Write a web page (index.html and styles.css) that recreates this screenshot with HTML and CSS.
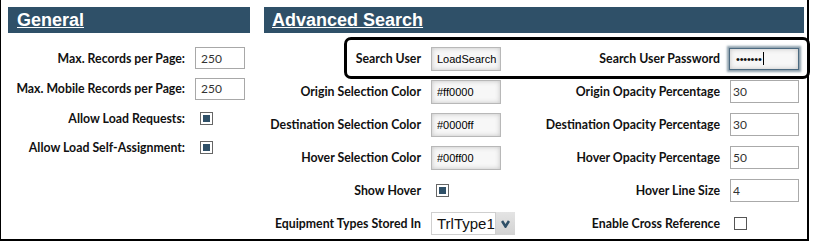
FILE: index.html
```html
<!DOCTYPE html>
<html>
<head>
<meta charset="utf-8">
<link rel="stylesheet" href="styles.css">
</head>
<body>
<div class="frame">
  <section class="panel general">
    <h2 class="hd">General</h2>
    <div class="form-left">
      <label class="lbl">Max. Records per Page:</label>
      <input class="inp" type="text" value="250">
      <label class="lbl">Max. Mobile Records per Page:</label>
      <input class="inp" type="text" value="250">
      <label class="lbl">Allow Load Requests:</label>
      <span class="cb checked"><span></span></span>
      <label class="lbl">Allow Load Self-Assignment:</label>
      <span class="cb checked"><span></span></span>
    </div>
  </section>
  <section class="panel adv">
    <h2 class="hd">Advanced Search</h2>
    <div class="form-right">
      <label class="lbl">Search User</label>
      <input class="cinp" type="text" value="LoadSearch">
      <label class="lbl">Search User Password</label>
      <div class="pw"><span class="dots">&#8226;&#8226;&#8226;&#8226;&#8226;&#8226;&#8226;</span><span class="caret"></span></div>

      <label class="lbl">Origin Selection Color</label>
      <input class="cinp" type="text" value="#ff0000">
      <label class="lbl">Origin Opacity Percentage</label>
      <input class="ninp" type="text" value="30">

      <label class="lbl">Destination Selection Color</label>
      <input class="cinp" type="text" value="#0000ff">
      <label class="lbl">Destination Opacity Percentage</label>
      <input class="ninp" type="text" value="30">

      <label class="lbl">Hover Selection Color</label>
      <input class="cinp" type="text" value="#00ff00">
      <label class="lbl">Hover Opacity Percentage</label>
      <input class="ninp" type="text" value="50">

      <label class="lbl">Show Hover</label>
      <span class="cb checked"><span></span></span>
      <label class="lbl">Hover Line Size</label>
      <input class="ninp" type="text" value="4">

      <label class="lbl">Equipment Types Stored In</label>
      <div class="sel">
        <span class="sel-text">TrlType1</span>
        <span class="sel-btn"><svg width="9" height="8" viewBox="0 0 9 8"><polyline points="1,1 4.5,6.5 8,1" fill="none" stroke="#2f5068" stroke-width="2.6"/></svg></span>
      </div>
      <label class="lbl">Enable Cross Reference</label>
      <span class="cb"></span>
    </div>
  </section>
  <div class="highlight"></div>
</div>
</body>
</html>
```
FILE: styles.css
```css
* { box-sizing: border-box; }
body { margin: 0; background: #fff; font-family: Lato, "Liberation Sans", sans-serif; }

.frame {
  position: relative;
  width: 809px;
  height: 241px;
  border-left: 1px solid #000;
  border-right: 2px solid #000;
  border-bottom: 2px solid #000;
  padding: 7px 3px 0 7px;
  display: flex;
  gap: 14px;
}
.general { width: 242px; }
.adv { width: 540px; }

.hd {
  margin: 0;
  height: 26px;
  background: #2f5068;
  color: #fff;
  font: bold 18px/27px "Liberation Sans", Arial, sans-serif;
  text-decoration: underline;
  text-underline-offset: 1px;
  padding-left: 9px;
}
.adv .hd { padding-left: 8px; }

.form-left {
  display: grid;
  grid-template-columns: 177px 55px;
  grid-template-rows: 30px 31px 28px 31px;
  column-gap: 10px;
  margin-top: 10px;
  align-items: center;
}
.form-right {
  display: grid;
  grid-template-columns: 157px 89px 190px 74px;
  grid-auto-rows: 33px;
  column-gap: 10px;
  margin-top: 9px;
  align-items: center;
}

.lbl {
  font: bold 12.3px Lato, "Liberation Sans", sans-serif;
  color: #111;
  text-align: right;
  white-space: nowrap;
}

.inp {
  width: 50px;
  height: 22px;
  border: 1px solid #a8a8a8;
  padding: 0 0 0 5px;
  font: 12px Lato, sans-serif;
  color: #333;
  background: #fff;
  outline: none;
}
.ninp {
  width: 69px;
  height: 23px;
  border: 1px solid #aaa;
  padding: 0 0 0 2px;
  font: 12px Lato, sans-serif;
  color: #333;
  background: #fff;
  outline: none;
}
.cinp {
  width: 70px;
  height: 24px;
  border: 1px solid #b8b8b8;
  padding: 0 0 0 5px;
  font: 11px "Liberation Sans", Arial, sans-serif;
  color: #000;
  background: #f7f7f7;
  box-shadow: inset 0 0 5px #c4c4c4;
  outline: none;
}
.pw {
  width: 70px;
  height: 22px;
  margin-left: -1px;
  border: 1px solid #4c6a80;
  background: #f7f7f7;
  box-shadow: inset 0 0 5px #c4c4c4, 0 0 2px 2px rgba(47, 80, 104, 0.55);
  display: flex;
  align-items: center;
  padding-left: 6px;
}
.dots {
  font: 11px "Liberation Sans", Arial, sans-serif;
  color: #111;
  letter-spacing: -0.2px;
}
.caret {
  width: 1px;
  height: 13px;
  background: #000;
  margin-left: 1px;
}

.cb {
  width: 13px;
  height: 13px;
  border: 1px solid #666;
  background: #fff;
  padding: 2px;
  margin-left: 5px;
  display: block;
}
.cb span {
  display: block;
  width: 7px;
  height: 7px;
  background: #2f5068;
}
.form-right .cb:last-child { margin-left: 4px; border-color: #555; }

.sel {
  width: 84px;
  height: 23px;
  display: flex;
}
.sel-text {
  flex: 1;
  border: 1px solid #cfcfcf;
  background: #fff;
  font: 15px/21px "Liberation Sans", Arial, sans-serif;
  color: #111;
  padding-left: 5px;
  white-space: nowrap;
  overflow: hidden;
}
.sel-btn {
  width: 19px;
  background: linear-gradient(#e4e4e4, #d2d2d2);
  display: flex;
  align-items: center;
  justify-content: center;
}

.highlight {
  position: absolute;
  left: 343px;
  top: 37px;
  width: 466px;
  height: 42px;
  border: 3px solid #000;
  border-radius: 7px;
}
```
